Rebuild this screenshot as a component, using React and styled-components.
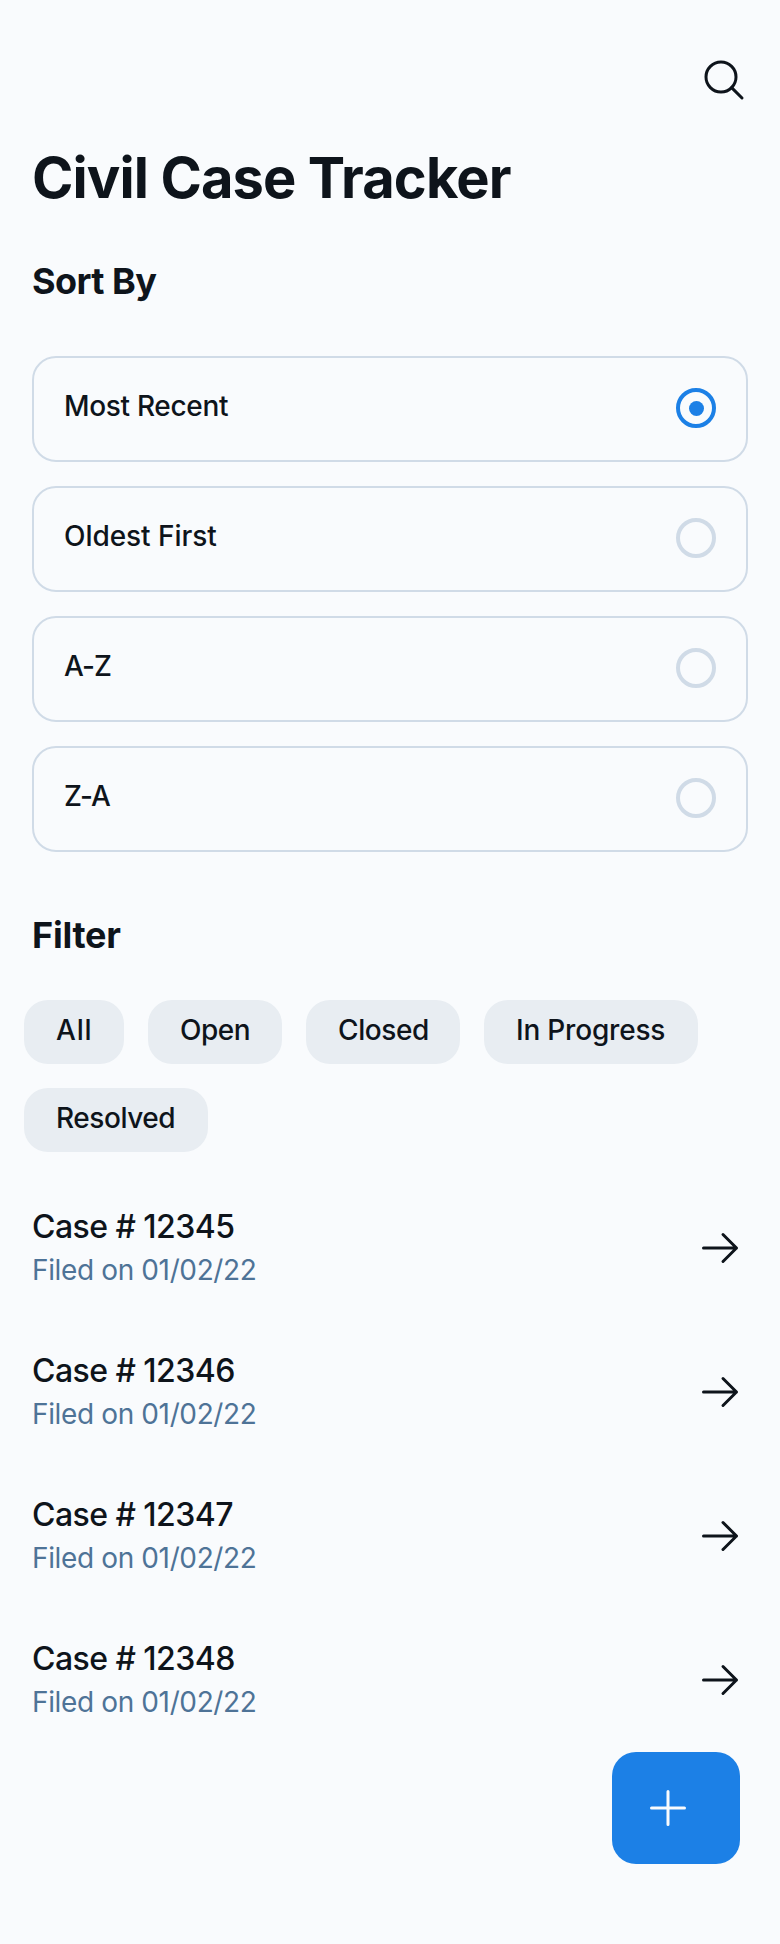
import React, { useState } from "react";
import styled, { createGlobalStyle } from "styled-components";

const color = {
  page: "#f9fbfd",
  ink: "#0e141b",
  muted: "#4e7397",
  line: "#d0dbe7",
  chip: "#e8edf2",
  accent: "#1c80e6",
};

const GlobalStyle = createGlobalStyle`
  *, *::before, *::after { box-sizing: border-box; }
  body {
    margin: 0;
    background: ${color.page};
    color: ${color.ink};
    font-family: Inter, "Liberation Sans", sans-serif;
  }
  button {
    font: inherit;
    color: inherit;
    border: 0;
    padding: 0;
    background: none;
    cursor: pointer;
  }
`;

const Page = styled.div`
  width: 780px;
  height: 1944px;
  display: flex;
  flex-direction: column;
  background: ${color.page};
  overflow: hidden;
`;

const TopBar = styled.header`
  display: flex;
  justify-content: flex-end;
  padding: 56px 32px 0;
`;

const IconButton = styled.button`
  display: flex;
  width: 48px;
  height: 48px;
`;

const Title = styled.h1`
  margin: 39px 32px 0;
  font-size: 56px;
  line-height: 70px;
  font-weight: 700;
  letter-spacing: -0.9px;
  white-space: nowrap;
`;

const SectionTitle = styled.h2`
  margin: ${(p) => p.$top}px 32px 0;
  font-size: 36px;
  line-height: 46px;
  font-weight: 700;
  letter-spacing: ${(p) => p.$tracking}px;
`;

const OptionList = styled.div`
  display: flex;
  flex-direction: column;
  gap: 24px;
  margin: 52px 32px 0;
`;

const Option = styled.label`
  display: flex;
  justify-content: space-between;
  align-items: flex-start;
  height: 106px;
  padding: 30px;
  border: 2px solid ${color.line};
  border-radius: 24px;
  cursor: pointer;
`;

const OptionLabel = styled.span`
  font-size: 28px;
  line-height: 36px;
  font-weight: 500;
  letter-spacing: ${(p) => p.$tracking}px;
`;

const Radio = styled.input`
  appearance: none;
  display: grid;
  place-items: center;
  width: 40px;
  height: 40px;
  margin: 0;
  border: 4px solid ${color.line};
  border-radius: 50%;

  &:checked { border-color: ${color.accent}; }

  &:checked::before {
    content: "";
    width: 15px;
    height: 15px;
    border-radius: 50%;
    background: ${color.accent};
  }
`;

const ChipRow = styled.div`
  display: flex;
  flex-wrap: wrap;
  gap: 24px;
  margin: 42px 24px 0;
`;

const Chip = styled.button`
  && {
    width: ${(p) => p.$width}px;
    height: 64px;
    padding: 0 0 4px 32px;
    border-radius: 24px;
    background: ${color.chip};
    font-size: 28px;
    line-height: 60px;
    font-weight: 500;
    letter-spacing: ${(p) => p.$tracking}px;
    text-align: left;
    white-space: nowrap;
  }
`;

const CaseList = styled.ul`
  list-style: none;
  margin: 24px 0 0;
  padding: 0;
`;

const CaseRow = styled.li`
  display: flex;
  align-items: center;
  justify-content: space-between;
  height: 144px;
  padding: 0 36px 0 32px;
`;

const CaseText = styled.div`
  padding-bottom: 1px;
`;

const CaseName = styled.div`
  font-size: 32px;
  line-height: 46px;
  font-weight: 500;
  letter-spacing: -0.55px;
`;

const CaseDate = styled.div`
  font-size: 28px;
  line-height: 41px;
  letter-spacing: -0.37px;
  color: ${color.muted};
`;

const Footer = styled.footer`
  display: flex;
  justify-content: flex-end;
  padding: 0 40px;
`;

const AddButton = styled.button`
  && {
    display: flex;
    align-items: center;
    width: 128px;
    height: 112px;
    padding-left: 32px;
    border-radius: 24px;
    background: ${color.accent};
    color: ${color.page};
  }
`;

const Icon = styled.svg.attrs({ viewBox: "0 0 256 256", "aria-hidden": true })`
  display: block;
  width: 48px;
  height: 48px;
  fill: none;
  stroke: currentColor;
  stroke-width: 16;
  stroke-linecap: round;
  stroke-linejoin: round;
`;

const options = [
  { label: "Most Recent", tracking: -0.33 },
  { label: "Oldest First", tracking: -0.05 },
  { label: "A-Z", tracking: -0.9 },
  { label: "Z-A", tracking: -0.9 },
];

const filters = [
  { label: "All", width: 100, tracking: 0.8 },
  { label: "Open", width: 134, tracking: -0.5 },
  { label: "Closed", width: 154, tracking: -0.4 },
  { label: "In Progress", width: 214, tracking: -0.2 },
  { label: "Resolved", width: 184, tracking: -0.45 },
];

const cases = [
  { id: "12345", filed: "01/02/22" },
  { id: "12346", filed: "01/02/22" },
  { id: "12347", filed: "01/02/22" },
  { id: "12348", filed: "01/02/22" },
];

export default function App() {
  const [sort, setSort] = useState("Most Recent");

  return (
    <>
      <GlobalStyle />
      <Page>
        <TopBar>
          <IconButton aria-label="Search">
            <Icon>
              <circle cx="112" cy="112" r="80" />
              <path d="M168.6 168.6 224 224" />
            </Icon>
          </IconButton>
        </TopBar>
        <Title>Civil Case Tracker</Title>

        <SectionTitle $top={45} $tracking={-0.55}>Sort By</SectionTitle>
        <OptionList>
          {options.map((o) => (
            <Option key={o.label}>
              <OptionLabel $tracking={o.tracking}>{o.label}</OptionLabel>
              <Radio
                type="radio"
                name="sort"
                checked={sort === o.label}
                onChange={() => setSort(o.label)}
              />
            </Option>
          ))}
        </OptionList>

        <SectionTitle $top={60} $tracking={-0.25}>Filter</SectionTitle>
        <ChipRow>
          {filters.map((f) => (
            <Chip key={f.label} $width={f.width} $tracking={f.tracking}>
              {f.label}
            </Chip>
          ))}
        </ChipRow>

        <CaseList>
          {cases.map((c) => (
            <CaseRow key={c.id}>
              <CaseText>
                <CaseName>Case # {c.id}</CaseName>
                <CaseDate>Filed on {c.filed}</CaseDate>
              </CaseText>
              <IconButton aria-label={`Open case ${c.id}`}>
                <Icon>
                  <path d="M40 128H216M144 56l72 72-72 72" />
                </Icon>
              </IconButton>
            </CaseRow>
          ))}
        </CaseList>

        <Footer>
          <AddButton aria-label="Add case">
            <Icon>
              <path d="M40 128H216M128 40V216" />
            </Icon>
          </AddButton>
        </Footer>
      </Page>
    </>
  );
}
